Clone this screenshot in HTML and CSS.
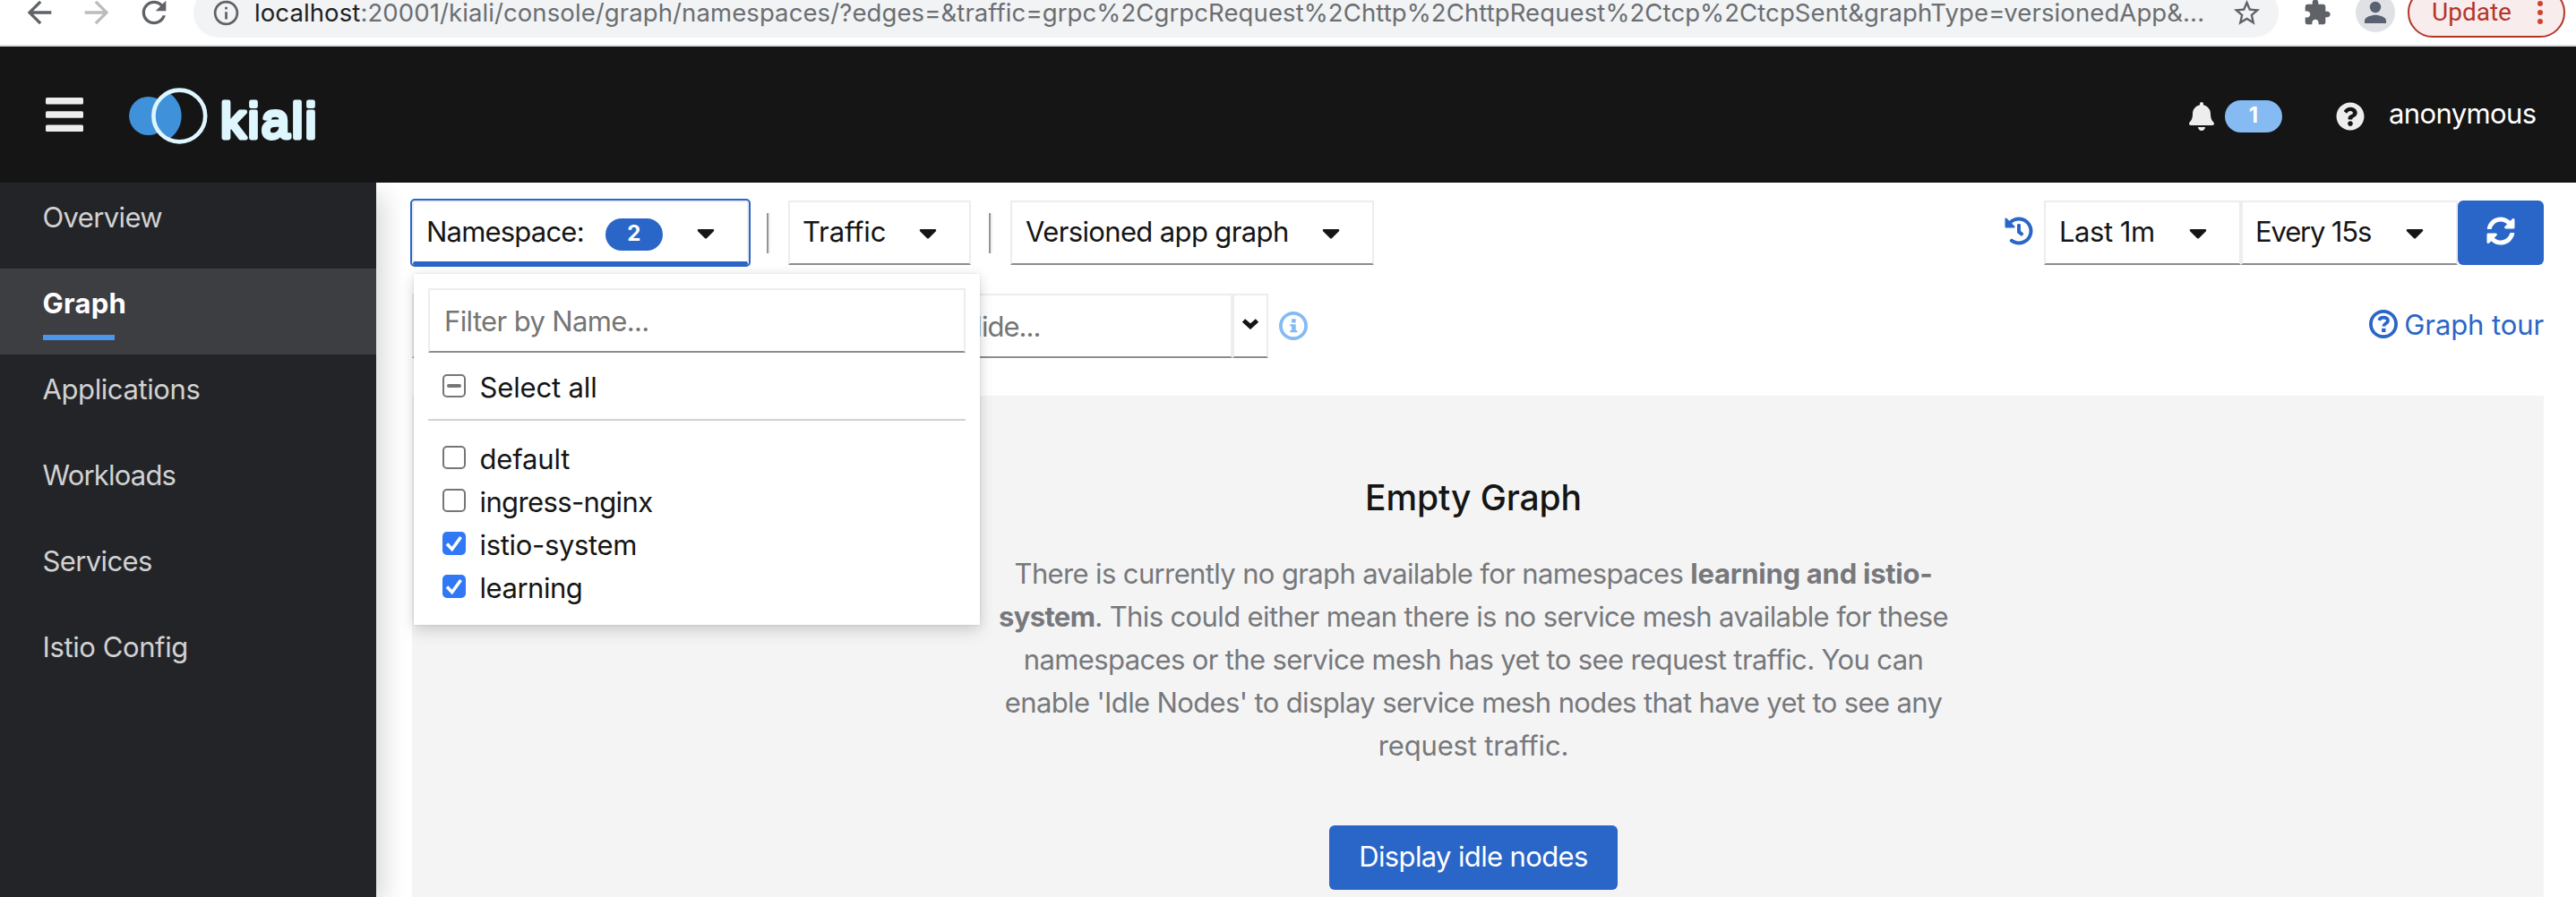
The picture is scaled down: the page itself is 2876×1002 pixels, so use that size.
FILE: index.html
```
<!DOCTYPE html>
<html lang="en">
<head>
<meta charset="utf-8">
<title>Kiali</title>
<link rel="stylesheet" href="styles.css">
</head>
<body>
<svg width="0" height="0" class="defs">
  <symbol id="caret" viewBox="0 0 320 512"><path d="M31.3 192h257.3c17.8 0 26.7 21.5 14.1 34.1L174.1 354.7c-7.8 7.8-20.5 7.8-28.3 0L17.2 226.1C4.6 213.5 13.5 192 31.3 192z"/></symbol>
</svg>

<div class="browser">
  <div class="browser-row">
    <svg class="nav-icon back" viewBox="0 0 24 24"><path d="M20 11H7.83l5.59-5.59L12 4l-8 8 8 8 1.41-1.41L7.83 13H20v-2z"/></svg>
    <svg class="nav-icon forward" viewBox="0 0 24 24"><path d="M12 4l-1.41 1.41L16.17 11H4v2h12.17l-5.58 5.59L12 20l8-8z"/></svg>
    <svg class="nav-icon reload" viewBox="0 0 24 24"><path d="M17.65 6.35C16.2 4.9 14.21 4 12 4c-4.42 0-7.99 3.58-7.99 8s3.57 8 7.99 8c3.73 0 6.84-2.55 7.73-6h-2.08c-.82 2.33-3.04 4-5.65 4-3.31 0-6-2.69-6-6s2.69-6 6-6c1.66 0 3.14.69 4.22 1.78L13 11h7V4l-2.35 2.35z"/></svg>
    <div class="address">
      <svg class="site-info" viewBox="0 0 24 24"><path d="M11 7h2v2h-2zm0 4h2v6h-2zm1-9C6.48 2 2 6.48 2 12s4.48 10 10 10 10-4.48 10-10S17.52 2 12 2zm0 18c-4.41 0-8-3.59-8-8s3.590-8 8-8 8 3.590 8 8-3.590 8-8 8z"/></svg>
      <span class="url"><b>localhost</b>:20001/kiali/console/graph/namespaces/?edges=&amp;traffic=grpc%2CgrpcRequest%2Chttp%2ChttpRequest%2Ctcp%2CtcpSent&amp;graphType=versionedApp&amp;...</span>
      <svg class="star" viewBox="0 0 24 24"><path d="M22 9.24l-7.19-.62L12 2 9.19 8.63 2 9.24l5.460 4.730L5.820 21 12 17.270 18.180 21l-1.630-7.030L22 9.240zM12 15.400l-3.760 2.270 1-4.280-3.320-2.880 4.380-.380L12 6.100l1.710 4.040 4.380.380-3.320 2.880 1 4.280L12 15.400z"/></svg>
    </div>
    <svg class="puzzle" viewBox="0 0 24 24"><path d="M20.500 11H19V7c0-1.100-.900-2-2-2h-4V3.500C13 2.120 11.880 1 10.500 1S8 2.120 8 3.500V5H4c-1.100 0-1.990.900-1.990 2v3.800H3.500c1.490 0 2.700 1.210 2.700 2.700s-1.210 2.700-2.700 2.700H2V20c0 1.100.900 2 2 2h3.800v-1.500c0-1.490 1.210-2.700 2.700-2.700 1.490 0 2.700 1.210 2.700 2.700V22H17c1.100 0 2-.900 2-2v-4h1.500c1.380 0 2.500-1.120 2.500-2.500S21.880 11 20.500 11z"/></svg>
    <svg class="avatar" viewBox="0 0 44 44"><circle cx="22" cy="22" r="22" fill="#dfe1e5"/><circle cx="22" cy="16" r="6.200" fill="#5a6172"/><path d="M10 34v-3c0-4 8-6.200 12-6.200s12 2.200 12 6.200v3z" fill="#5a6172"/></svg>
    <div class="update"><span>Update</span><svg viewBox="0 0 6 28"><circle cx="3" cy="4" r="3"/><circle cx="3" cy="14" r="3"/><circle cx="3" cy="24" r="3"/></svg></div>
  </div>
</div>

<header class="masthead">
  <svg class="burger" viewBox="0 0 42 38"><rect width="42" height="7.500" rx="1.500"/><rect y="15.200" width="42" height="7.500" rx="1.500"/><rect y="30.500" width="42" height="7.500" rx="1.500"/></svg>
  <svg class="logo" viewBox="144 94 214 70">
    <circle cx="165.700" cy="129.500" r="21.600" fill="#3f92da"/>
    <circle cx="200.300" cy="129.500" r="29" fill="#151515"/>
    <path d="M189.800 104.500A30.800 30.800 0 0 1 189.800 154.500A27 27 0 0 1 189.800 104.500z" fill="#3f92da"/>
    <circle cx="200.300" cy="129.500" r="28.900" fill="none" stroke="#def6fe" stroke-width="4.600"/>
    <text x="246.200" y="153.600" textLength="107">kiali</text>
  </svg>
  <div class="tools">
    <svg class="bell" viewBox="0 0 448 512"><path d="M224 512c35.320 0 63.970-28.650 63.970-64H160.030c0 35.350 28.650 64 63.970 64zm215.390-149.710c-19.320-20.760-55.470-51.990-55.470-154.290 0-77.700-54.480-139.900-127.940-155.160V32c0-17.670-14.320-32-31.980-32s-31.980 14.330-31.980 32v20.840C118.560 68.100 64.080 130.300 64.080 208c0 102.300-36.150 133.530-55.470 154.290-6 6.450-8.660 14.160-8.610 21.710.110 16.400 12.980 32 32.100 32h383.800c19.120 0 32-15.600 32.100-32 .050-7.550-2.610-15.270-8.610-21.710z"/></svg>
    <span class="badge light">1</span>
    <svg class="help" viewBox="0 0 512 512"><path d="M504 256c0 136.997-111.043 248-248 248S8 392.997 8 256C8 119.083 119.043 8 256 8s248 111.083 248 248zM262.655 90c-54.497 0-89.255 22.957-116.549 63.758-3.536 5.286-2.353 12.415 2.715 16.258l34.699 26.310c5.205 3.947 12.621 3.008 16.665-2.122 17.864-22.658 30.113-35.797 57.303-35.797 20.429 0 45.698 13.148 45.698 32.958 0 14.976-12.363 22.667-32.534 33.976C247.128 238.528 216 254.941 216 296v4c0 6.627 5.373 12 12 12h56c6.627 0 12-5.373 12-12v-1.333c0-28.462 83.186-29.647 83.186-106.667 0-58.002-60.165-102-116.531-102zM256 338c-25.365 0-46 20.635-46 46 0 25.364 20.635 46 46 46s46-20.636 46-46c0-25.365-20.635-46-46-46z"/></svg>
    <span class="user">anonymous</span>
  </div>
</header>

<div class="page">
  <nav class="sidebar">
    <a class="item">Overview</a>
    <a class="item active">Graph</a>
    <a class="item wide">Applications</a>
    <a class="item tight">Workloads</a>
    <a class="item">Services</a>
    <a class="item wide">Istio Config</a>
  </nav>

  <main class="main">
    <div class="toolbar">
      <div class="ns">
        <div class="toggle focus"><span class="label tight">Namespace:</span><span class="badge">2</span><svg class="caret"><use href="#caret"/></svg></div>
        <div class="menu">
          <div class="filter">Filter by Name...</div>
          <label class="check all"><i class="box mixed"></i><span class="ls1">Select all</span></label>
          <hr>
          <label class="check"><i class="box"></i><span class="ls1">default</span></label>
          <label class="check"><i class="box"></i><span>ingress-nginx</span></label>
          <label class="check"><i class="box on"><svg viewBox="0 0 26 26"><path d="M5 13.500L10.700 19.500L20.500 6"/></svg></i><span class="ls3">istio-system</span></label>
          <label class="check"><i class="box on"><svg viewBox="0 0 26 26"><path d="M5 13.500L10.700 19.500L20.500 6"/></svg></i><span class="ls4">learning</span></label>
        </div>
      </div>
      <i class="sep"></i>
      <div class="toggle traffic"><span class="label ls1">Traffic</span><svg class="caret"><use href="#caret"/></svg></div>
      <i class="sep"></i>
      <div class="toggle type"><span class="label">Versioned app graph</span><svg class="caret"><use href="#caret"/></svg></div>
      <div class="refresh">
        <svg class="history" viewBox="0 0 512 512"><path d="M504 255.531c.253 136.640-111.180 248.372-247.820 248.468-59.015.042-113.223-20.530-155.822-54.911-11.077-8.940-11.905-25.541-1.839-35.607l11.267-11.267c8.609-8.609 22.353-9.551 31.891-1.984C173.062 425.135 212.781 440 256 440c101.705 0 184-82.311 184-184 0-101.705-82.311-184-184-184-48.814 0-93.149 18.969-126.068 49.932l50.754 50.754c10.080 10.080 2.941 27.314-11.313 27.314H24c-8.837 0-16-7.163-16-16V38.627c0-14.254 17.234-21.393 27.314-11.314l49.372 49.372C129.209 34.136 189.552 8 256 8c136.810 0 247.747 110.780 248 247.531zm-180.912 78.784l9.823-12.630c8.138-10.463 6.253-25.542-4.210-33.679L288 256.349V152c0-13.255-10.745-24-24-24h-16c-13.255 0-24 10.745-24 24v135.651l65.409 50.874c10.463 8.137 25.541 6.253 33.679-4.210z"/></svg>
        <div class="toggle last"><span class="label ls4">Last 1m</span><svg class="caret"><use href="#caret"/></svg></div>
        <div class="toggle every"><span class="label ls9">Every 15s</span><svg class="caret"><use href="#caret"/></svg></div>
        <button class="sync"><svg viewBox="0 0 512 512"><path d="M370.720 133.280C339.458 104.008 298.888 87.962 255.848 88c-77.458.068-144.328 53.178-162.791 126.850-1.344 5.363-6.122 9.150-11.651 9.150H24.103c-7.498 0-13.194-6.807-11.807-14.176C33.933 94.924 134.813 8 256 8c66.448 0 126.791 26.136 171.315 68.685L463.030 40.970C478.149 25.851 504 36.559 504 57.941V192c0 13.255-10.745 24-24 24H345.941c-21.382 0-32.090-25.851-16.971-40.971l41.750-41.749zM32 296h134.059c21.382 0 32.090 25.851 16.971 40.971l-41.750 41.750c31.262 29.273 71.835 45.319 114.876 45.280 77.418-.070 144.315-53.144 162.787-126.849 1.344-5.363 6.122-9.150 11.651-9.150h57.304c7.498 0 13.194 6.807 11.807 14.176C478.067 417.076 378.187 504 256 504c-66.448 0-126.791-26.136-171.315-68.685L48.970 471.030C33.851 486.149 8 475.441 8 454.059V320c0-13.255 10.745-24 24-24z"/></svg></button>
      </div>
    </div>

    <div class="findbar">
      <div class="field find"></div>
      <div class="field hide">Hide...</div>
      <div class="field chevron"><svg viewBox="0 0 20 13"><path d="M2.500 3L10 9.700L17.500 3"/></svg></div>
      <svg class="info" viewBox="0 0 32 32"><circle cx="16" cy="16" r="14.100"/><path d="M14 8.200h4.700v4.200H14zM12.300 14.200h6.400v6.700h1.600v2.300h-8v-2.300H14v-4.400h-1.700z"/></svg>
      <a class="tour"><svg viewBox="0 0 32 32"><circle cx="16" cy="16" r="14.100"/><path class="hook" d="M11.200 11.800C12 9.400 13.800 8.600 16 8.600C18.900 8.600 21 10.100 21 12.200C21 15.300 16.300 15.200 16.300 18.600"/><rect x="14.100" y="20.800" width="4.400" height="4.200"/></svg><span>Graph tour</span></a>
    </div>

    <section class="canvas">
      <h2>Empty Graph</h2>
      <p>There is currently no graph available for namespaces <b>learning and istio-</b><br><b class="sys">system</b>. This could either mean there is no service mesh available for these<br>namespaces or the service mesh has yet to see request traffic. You can<br>enable 'Idle Nodes' to display service mesh nodes that have yet to see any<br><span class="ls1">request traffic.</span></p>
      <button class="primary">Display idle nodes</button>
    </section>
  </main>
</div>
</body>
</html>
```

FILE: styles.css
```
* { box-sizing: border-box; }
body {
  margin: 0;
  height: 1002px;
  overflow: hidden;
  display: flex;
  flex-direction: column;
  background: #fff;
  color: #151515;
  font: 31px/48px Inter, "Open Sans", sans-serif;
  letter-spacing: -0.63px;
  white-space: nowrap;
}
svg { display: block; flex: none; }
i { font-style: normal; }
button { border: 0; padding: 0; font: inherit; letter-spacing: inherit; }
.defs { position: absolute; }
.tight { letter-spacing: -0.8px; }
.ls1 { letter-spacing: -0.15px; }
.ls3 { letter-spacing: -0.33px; }
.ls4 { letter-spacing: -0.46px; }
.ls9 { letter-spacing: -1.16px; }

/* browser toolbar */
.browser { height: 52px; flex: none; overflow: hidden; border-bottom: 2px solid #dadce0; }
.browser-row { display: flex; align-items: center; height: 56px; margin-top: -14px; }
.nav-icon { width: 40px; height: 40px; fill: #5f6368; }
.back { margin-left: 24px; }
.forward { margin-left: 24px; fill: #babcbe; }
.reload { margin-left: 24px; }
.address { display: flex; align-items: center; width: 2328px; height: 56px; margin-left: 24px; padding-left: 20px; border-radius: 28px; background: #f1f3f4; }
.site-info { width: 33px; height: 33px; fill: #5f6368; }
.url { flex: 1; margin-left: 15px; font-size: 27.5px; line-height: 28px; letter-spacing: 0.1px; color: #6b6e72; }
.url b { font-weight: 400; color: #202124; }
.star { width: 35px; height: 35px; margin-right: 18px; fill: #5f6368; }
.puzzle { width: 32px; height: 32px; margin-left: 27px; fill: #5f6368; }
.avatar { width: 44px; height: 44px; margin-left: 27px; }
.update { display: flex; align-items: center; width: 176px; height: 56px; margin-left: 14px; padding-left: 25px; border: 2px solid #b3362b; border-radius: 28px; background: #f9ecec; color: #b3362b; font: 28px/28px Roboto, sans-serif; letter-spacing: 0; }
.update svg { width: 6px; height: 28px; margin-left: 29px; fill: #cf4332; }

/* masthead */
.masthead { display: flex; align-items: center; height: 152px; flex: none; position: relative; z-index: 2; background: #151515; }
.burger { width: 42px; height: 38px; margin-left: 51px; fill: #ededed; }
.logo { width: 214px; height: 70px; margin: 2px 0 0 51px; }
.logo text { font: 56px "Liberation Sans", Arial, sans-serif; letter-spacing: 0; fill: #def6fe; stroke: #def6fe; stroke-width: 4.8px; stroke-linejoin: round; }
.tools { display: flex; align-items: center; margin-left: auto; padding-top: 4px; color: #fff; }
.bell { width: 28px; height: 32px; fill: #ededed; }
.help { width: 32px; height: 32px; margin-left: 60px; fill: #ededed; }
.user { width: 209px; margin-left: 27px; padding-bottom: 7px; }
.badge { display: inline-flex; justify-content: center; width: 64px; height: 36px; padding-bottom: 2px; border-radius: 18px; background: #2a66c8; color: #fff; font-size: 24px; line-height: 34px; font-weight: 700; letter-spacing: 0; }
.badge.light { margin-left: 12px; background: #85baf3; }

/* sidebar */
.page { display: flex; flex: 1; min-height: 0; }
.sidebar { position: relative; z-index: 1; width: 420px; flex: none; background: #232428; box-shadow: 14px 10px 24px -4px rgba(3, 3, 3, 0.14); }
.item { display: block; height: 96px; padding-left: 47.5px; line-height: 77px; color: #d2d2d2; }
.item.wide { letter-spacing: -0.4px; }
.item.tight { letter-spacing: -0.8px; }
.item.active { background: #3d3e42; color: #fff; font-weight: 700; letter-spacing: 0.25px; }
.item.active::after { content: ""; display: block; width: 80px; height: 6px; margin-top: -3px; background: #4a96ea; }

/* graph toolbar */
.main { display: flex; flex: 1; flex-direction: column; min-width: 0; padding: 20px 36px 0 40px; }
.toolbar { display: flex; align-items: center; height: 72px; flex: none; }
.ns { position: relative; z-index: 3; }
.toggle { display: flex; align-items: center; height: 72px; padding: 0 36px 0 14px; border: 2px solid #ededed; border-bottom-color: #8a8d90; background: #fff; }
.toggle .label { padding-bottom: 3px; }
.toggle.focus { width: 376px; border-bottom: 4px solid #2a66c8; padding-top: 2px; outline: 2px solid #2a66c8; border-radius: 3px; }
.toggle .badge { margin: 3px 0 0 24px; }
.caret { width: 20px; height: 32px; margin-left: auto; fill: #151515; }
.sep { width: 4px; height: 45px; margin: 0 20px 0; border-left: 2px solid #959595; border-right: 2px solid #efefef; }
.traffic { width: 204px; }
.type { width: 406px; padding-left: 15px; }
.refresh { display: flex; align-items: center; margin-left: auto; }
.history { width: 32px; height: 32px; margin: 0 12px 5px 0; fill: #2a66c8; }
.last { width: 220px; padding-left: 15px; }
.every { width: 242px; }
.sync { display: flex; align-items: center; justify-content: center; width: 96px; height: 72px; padding-bottom: 5px; border-radius: 6px; background: #2a66c8; }
.sync svg { width: 32px; height: 32px; fill: #fff; }

/* namespace menu */
.menu { position: absolute; top: 82px; left: 2px; width: 632px; height: 392px; padding: 16px; background: #fff; box-shadow: 0 8px 16px rgba(3, 3, 3, 0.12), 0 0 12px rgba(3, 3, 3, 0.08), 0 0 2px rgba(3, 3, 3, 0.1); }
.filter { height: 72px; padding: 1px 0 0 16px; border: 2px solid #ededed; border-bottom-color: #8a8d90; line-height: 68px; color: #757575; }
.check { display: flex; align-items: center; gap: 15.5px; height: 48px; padding-left: 16px; }
.check span { padding-top: 2px; }
.check.all { margin-top: 14px; }
.menu hr { height: 2px; margin: 12px 0 18px; border: 0; background: #d2d2d2; }
.box { width: 26px; height: 26px; margin-bottom: 2px; border: 2px solid #767676; border-radius: 5px; }
.mixed { display: flex; align-items: center; justify-content: center; }
.mixed::after { content: ""; width: 16px; height: 4px; border-radius: 2px; background: #767676; }
.on { border: 0; background: #3178f6; }
.on svg { width: 26px; height: 26px; fill: none; stroke: #fff; stroke-width: 3.6; }

/* find and hide */
.findbar { display: flex; align-items: center; height: 72px; flex: none; margin-top: 32px; }
.field { height: 72px; padding-top: 1px; border: 2px solid #ededed; border-bottom-color: #8a8d90; line-height: 68px; color: #757575; }
.find { width: 596px; }
.hide { width: 320px; padding-left: 16px; letter-spacing: -1px; }
.chevron { display: flex; justify-content: center; width: 40px; padding-top: 25px; }
.chevron svg { width: 20px; height: 13px; fill: none; stroke: #151515; stroke-width: 5; }
.info { width: 32px; height: 32px; margin-left: 12px; fill: #85baf3; }
.info circle { fill: none; stroke: #85baf3; stroke-width: 3.8; }
.tour { display: flex; align-items: center; gap: 7px; margin-left: auto; padding-bottom: 4px; color: #2a66c8; letter-spacing: -0.1px; }
.tour span { padding-top: 1px; }
.tour svg { width: 32px; height: 32px; fill: #2a66c8; }
.tour circle, .hook { fill: none; stroke: #2a66c8; stroke-width: 3.8; }

/* empty state */
.canvas { display: flex; flex: 1; flex-direction: column; align-items: center; margin-top: 42px; padding: 84px 10px 0 0; background: #f4f4f4; text-align: center; }
.canvas h2 { margin: 0 0 31px; font-size: 39px; font-weight: 500; line-height: 60px; letter-spacing: -0.1px; }
.canvas p { margin: 0 0 65px; color: #77787c; }
.canvas p b { letter-spacing: -0.26px; }
.canvas p .sys { letter-spacing: -0.64px; }
.primary { flex: none; width: 322px; height: 72px; padding-bottom: 3px; border-radius: 6px; background: #2a66c8; color: #fff; }
```
